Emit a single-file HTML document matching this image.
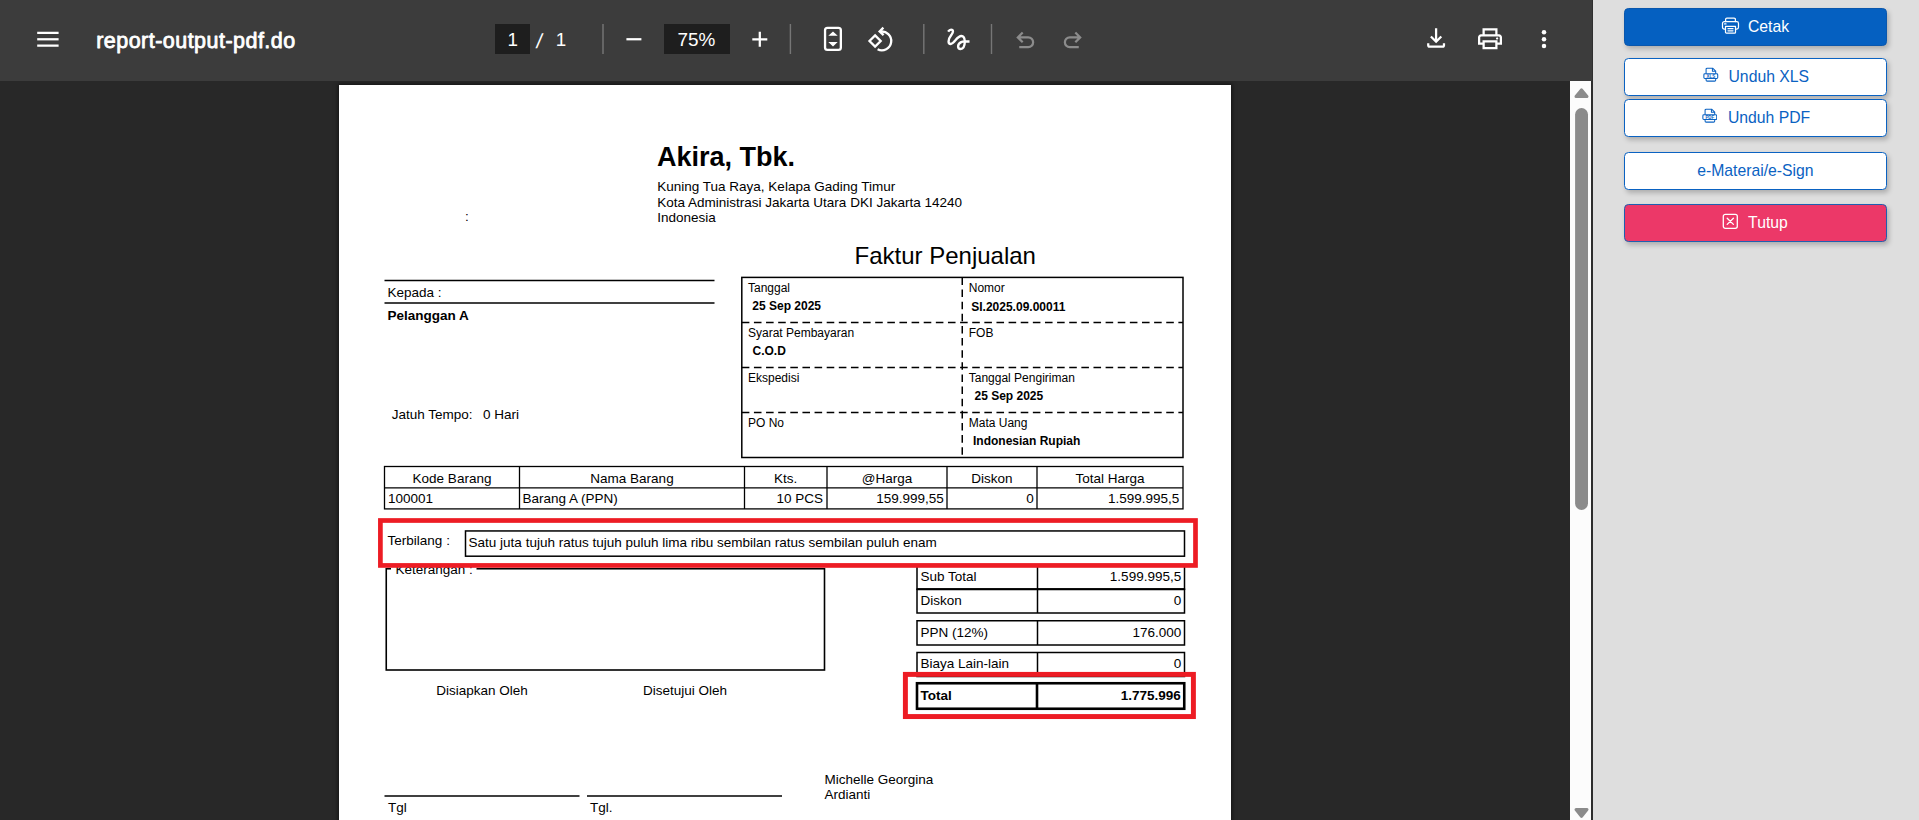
<!DOCTYPE html>
<html lang="id">
<head>
<meta charset="utf-8">
<title>report-output-pdf.do</title>
<style>
html,body{margin:0;padding:0;}
body{width:1919px;height:820px;overflow:hidden;position:relative;background:#dedede;font-family:"Liberation Sans",sans-serif;}
#viewer{position:absolute;left:0;top:0;width:1593px;height:820px;background:#282828;overflow:hidden;}
#viewer svg.pg{position:absolute;left:0;top:0;}
#tb{position:absolute;left:0;top:0;width:1592px;height:81px;background:#3c3c3c;}
#pgbg{position:absolute;left:339px;top:85px;width:892px;height:760px;background:#fff;box-shadow:0 0 4px 1px rgba(0,0,0,.55);}
#tb svg{position:absolute;left:0;top:0;}
#sb{position:absolute;left:1570px;top:81px;width:21px;height:739px;background:#fcfcfc;}
#sbline{position:absolute;left:1591px;top:81px;width:2px;height:739px;background:#2d2d2d;}
#sbline2{position:absolute;left:1592px;top:0;width:1px;height:81px;background:#2f2f2f;}
#panel{position:absolute;left:1593px;top:0;width:326px;height:820px;background:#dedede;}
.btn{position:absolute;left:31px;width:261px;height:36px;border:1px solid #0a62c2;border-radius:4.5px;background:#fff;color:#0a62c2;box-shadow:2px 3px 5px rgba(0,0,0,.22);font-size:15.75px;}
.btn span{position:absolute;top:0;line-height:36px;white-space:nowrap;}
.btn svg{position:absolute;}
.b1{top:8px;background:#0560c1;border-color:#0a57ad;color:#fff;}
.b2{top:58px;}
.b3{top:99px;}
.b4{top:152px;}
.b5{top:204px;background:#ec3868;border-color:#1f5fb0;color:#fff;}
</style>
</head>
<body>
<div id="viewer">
<div id="pgbg"></div>
<svg class="pg" width="1593" height="820" viewBox="0 0 1593 820" font-family="'Liberation Sans', sans-serif">
<line x1="384.5" y1="280.5" x2="714.5" y2="280.5" stroke="#000" stroke-width="1.4"/>
<line x1="384.5" y1="303" x2="714.5" y2="303" stroke="#000" stroke-width="1.4"/>
<rect x="741.8" y="277.4" width="441.2" height="180.1" fill="none" stroke="#000" stroke-width="1.5"/>
<line x1="741.8" y1="322.4" x2="1183" y2="322.4" stroke="#000" stroke-width="1.5" stroke-dasharray="7.58 4.547"/>
<line x1="741.8" y1="367.4" x2="1183" y2="367.4" stroke="#000" stroke-width="1.5" stroke-dasharray="7.58 4.547"/>
<line x1="741.8" y1="412.4" x2="1183" y2="412.4" stroke="#000" stroke-width="1.5" stroke-dasharray="7.58 4.547"/>
<line x1="962.25" y1="277.4" x2="962.25" y2="457.5" stroke="#000" stroke-width="1.5" stroke-dasharray="7.58 4.547"/>
<rect x="384.5" y="466.5" width="798.5" height="42.4" fill="none" stroke="#000" stroke-width="1.3"/>
<line x1="384.5" y1="487.8" x2="1183" y2="487.8" stroke="#000" stroke-width="1.3"/>
<line x1="519.5" y1="466.5" x2="519.5" y2="508.9" stroke="#000" stroke-width="1.3"/>
<line x1="744.5" y1="466.5" x2="744.5" y2="508.9" stroke="#000" stroke-width="1.3"/>
<line x1="827" y1="466.5" x2="827" y2="508.9" stroke="#000" stroke-width="1.3"/>
<line x1="947" y1="466.5" x2="947" y2="508.9" stroke="#000" stroke-width="1.3"/>
<line x1="1037" y1="466.5" x2="1037" y2="508.9" stroke="#000" stroke-width="1.3"/>
<rect x="465.5" y="530.95" width="719.0" height="25.25" fill="none" stroke="#000" stroke-width="1.5"/>
<rect x="386.25" y="568.75" width="438.25" height="101.25" fill="none" stroke="#000" stroke-width="1.6"/>
<rect x="391" y="562" width="85.5" height="14" fill="#fff"/>
<rect x="917" y="566" width="267.5" height="23.25" fill="none" stroke="#000" stroke-width="1.5"/>
<rect x="917" y="589.25" width="267.5" height="23.75" fill="none" stroke="#000" stroke-width="1.5"/>
<rect x="917" y="620.75" width="267.5" height="24.25" fill="none" stroke="#000" stroke-width="1.5"/>
<rect x="917" y="652.5" width="267.5" height="24.0" fill="none" stroke="#000" stroke-width="1.5"/>
<line x1="1037.5" y1="566" x2="1037.5" y2="613" stroke="#000" stroke-width="1.5"/>
<line x1="1037.5" y1="620.75" x2="1037.5" y2="645" stroke="#000" stroke-width="1.5"/>
<line x1="1037.5" y1="652.5" x2="1037.5" y2="676" stroke="#000" stroke-width="1.5"/>
<line x1="917" y1="589.25" x2="1184.5" y2="589.25" stroke="#000" stroke-width="1.8"/>
<rect x="917" y="683.25" width="267.25" height="25.5" fill="none" stroke="#000" stroke-width="2.6"/>
<line x1="1037" y1="683.25" x2="1037" y2="708.75" stroke="#000" stroke-width="2.6"/>
<line x1="384.5" y1="796" x2="579.5" y2="796" stroke="#000" stroke-width="1.4"/>
<line x1="587" y1="796" x2="782" y2="796" stroke="#000" stroke-width="1.4"/>
<text x="657" y="165.5" font-size="27" font-weight="700">Akira, Tbk.</text>
<text x="657.3" y="190.75" font-size="13.5">Kuning Tua Raya, Kelapa Gading Timur</text>
<text x="657.3" y="206.75" font-size="13.5">Kota Administrasi Jakarta Utara DKI Jakarta 14240</text>
<text x="657.3" y="222" font-size="13.5">Indonesia</text>
<text x="465" y="221" font-size="13.5">:</text>
<text x="854.5" y="263.75" font-size="24">Faktur Penjualan</text>
<text x="387.5" y="297" font-size="13.5">Kepada :</text>
<text x="387.5" y="320" font-size="13.5" font-weight="700">Pelanggan A</text>
<text x="391.8" y="418.75" font-size="13.5">Jatuh Tempo:</text>
<text x="483.1" y="418.75" font-size="13.5">0 Hari</text>
<text x="748" y="292" font-size="12">Tanggal</text>
<text x="968.75" y="292" font-size="12">Nomor</text>
<text x="748" y="337" font-size="12">Syarat Pembayaran</text>
<text x="968.75" y="337" font-size="12">FOB</text>
<text x="748" y="382" font-size="12">Ekspedisi</text>
<text x="968.75" y="382" font-size="12">Tanggal Pengiriman</text>
<text x="748" y="427" font-size="12">PO No</text>
<text x="968.75" y="427" font-size="12">Mata Uang</text>
<text x="752.3" y="310.2" font-size="12" font-weight="700">25 Sep 2025</text>
<text x="971.25" y="311.25" font-size="12" font-weight="700">SI.2025.09.00011</text>
<text x="752.5" y="355" font-size="12" font-weight="700">C.O.D</text>
<text x="974.5" y="400" font-size="12" font-weight="700">25 Sep 2025</text>
<text x="973" y="445" font-size="12" font-weight="700">Indonesian Rupiah</text>
<text x="452" y="483" font-size="13.5" text-anchor="middle">Kode Barang</text>
<text x="632" y="483" font-size="13.5" text-anchor="middle">Nama Barang</text>
<text x="785.75" y="483" font-size="13.5" text-anchor="middle">Kts.</text>
<text x="887" y="483" font-size="13.5" text-anchor="middle">@Harga</text>
<text x="992" y="483" font-size="13.5" text-anchor="middle">Diskon</text>
<text x="1110" y="483" font-size="13.5" text-anchor="middle">Total Harga</text>
<text x="388" y="503" font-size="13.5">100001</text>
<text x="522.5" y="503" font-size="13.5">Barang A (PPN)</text>
<text x="823" y="503" font-size="13.5" text-anchor="end">10 PCS</text>
<text x="943.75" y="503" font-size="13.5" text-anchor="end">159.999,55</text>
<text x="1033.75" y="503" font-size="13.5" text-anchor="end">0</text>
<text x="1179.25" y="503" font-size="13.5" text-anchor="end">1.599.995,5</text>
<text x="387.6" y="544.8" font-size="13.5">Terbilang :</text>
<text x="468.6" y="546.7" font-size="13.5">Satu juta tujuh ratus tujuh puluh lima ribu sembilan ratus sembilan puluh enam</text>
<text x="395.4" y="574" font-size="13.5">Keterangan :</text>
<text x="920.5" y="580.75" font-size="13.5">Sub Total</text>
<text x="1181.2" y="580.75" font-size="13.5" text-anchor="end">1.599.995,5</text>
<text x="920.5" y="605" font-size="13.5">Diskon</text>
<text x="1181.2" y="605" font-size="13.5" text-anchor="end">0</text>
<text x="920.5" y="636.75" font-size="13.5">PPN (12%)</text>
<text x="1181.2" y="636.75" font-size="13.5" text-anchor="end">176.000</text>
<text x="920.5" y="668" font-size="13.5">Biaya Lain-lain</text>
<text x="1181.2" y="668" font-size="13.5" text-anchor="end">0</text>
<text x="920.5" y="700" font-size="13.5" font-weight="700">Total</text>
<text x="1180.75" y="700" font-size="13.5" font-weight="700" text-anchor="end">1.775.996</text>
<text x="436.25" y="695" font-size="13.5">Disiapkan Oleh</text>
<text x="643" y="695" font-size="13.5">Disetujui Oleh</text>
<text x="388" y="812.3" font-size="13.5">Tgl</text>
<text x="590" y="812.3" font-size="13.5">Tgl.</text>
<text x="824.5" y="784.25" font-size="13.5">Michelle Georgina</text>
<text x="824.5" y="799.25" font-size="13.5">Ardianti</text>
<rect x="380.4" y="520.5" width="815.1" height="44.950000000000045" fill="none" stroke="#ed1c24" stroke-width="4.7"/>
<rect x="905.4" y="674.4" width="288.0000000000001" height="42.14999999999998" fill="none" stroke="#ed1c24" stroke-width="4.95"/>
</svg>
<div id="tb">
<svg width="1593" height="81" viewBox="0 0 1593 81" font-family="'Liberation Sans', sans-serif" fill="#fff">
<rect x="37.2" y="31.75" width="21.4" height="2.25" fill="#fff"/>
<rect x="37.2" y="38.15" width="21.4" height="2.25" fill="#fff"/>
<rect x="37.2" y="44.5" width="21.4" height="2.25" fill="#fff"/>
<text x="96.2" y="47.8" font-size="21.5" letter-spacing="0.47" stroke="#fff" stroke-width="0.8" stroke-linejoin="round">report-output-pdf.do</text>
<rect x="495" y="24" width="35" height="30" fill="#1e1e1e"/>
<text x="512.7" y="46.4" font-size="18.8" text-anchor="middle">1</text>
<text x="0" y="0" font-size="20.5" text-anchor="middle" transform="translate(538.3,48.2) skewX(-9)">/</text>
<text x="560.9" y="46.4" font-size="18.8" text-anchor="middle">1</text>
<rect x="602.3" y="24" width="1.4" height="30" fill="#fff" fill-opacity="0.3"/>
<rect x="789.6999999999999" y="24" width="1.4" height="30" fill="#fff" fill-opacity="0.3"/>
<rect x="923.0999999999999" y="24" width="1.4" height="30" fill="#fff" fill-opacity="0.3"/>
<rect x="990.8" y="24" width="1.4" height="30" fill="#fff" fill-opacity="0.3"/>
<g transform="translate(618.9,54.25) scale(0.03125)"><path d="M240-444v-72h480v72H240Z" fill="#fff"/></g>
<rect x="664" y="24" width="66" height="30" fill="#1e1e1e"/>
<text x="696.5" y="46.4" font-size="18.9" text-anchor="middle">75%</text>
<g transform="translate(744.8,54.25) scale(0.03125)"><path d="M444-444H240v-72h204v-204h72v204h204v72H516v204h-72v-204Z" fill="#fff"/></g>
<rect x="825.05" y="27.95" width="15.8" height="22" rx="2.4" fill="none" stroke="#fff" stroke-width="2.3"/>
<path d="M833 31.6 L837.7 35.8 H828.3 Z M833 46.4 L837.7 42.1 H828.3 Z" fill="#fff"/>
<path d="M875.1 35.4 L880.7 41 L875.1 46.6 L869.5 41 Z" fill="none" stroke="#fff" stroke-width="2.3" stroke-linejoin="miter"/>
<path d="M880 31.7 A9.4 9.4 0 1 1 877.6 49.3" fill="none" stroke="#fff" stroke-width="2.3"/>
<path d="M883.4 27.6 L879.6 31.5 L883.6 35.2" fill="none" stroke="#fff" stroke-width="2.3"/>
<g transform="translate(943.25,54.25) scale(0.03125)"><path d="M155 -724 Q200 -790 250 -790 Q310 -790 310 -728 Q310 -690 262 -622 Q170 -500 170 -410 Q170 -327 241 -327 Q290 -327 396 -453 Q500 -583 582 -583 Q680 -583 691 -410 Q683 -170 555 -170 Q476 -170 476 -250 Q476 -330 560 -380 Q610 -408 691 -410 L840 -410" fill="none" stroke="#fff" stroke-width="76" stroke-linecap="butt" stroke-linejoin="round"/></g>
<g transform="translate(1010.25,54.25) scale(0.03125)"><path d="M288-192v-72h288q50 0 85-35t35-85q0-50-35-85t-85-35H330l93 93-51 51-180-180 180-180 51 51-93 93h246q80 0 136 56t56 136q0 80-56 136t-136 56H288Z" fill="#8c8c8c"/></g>
<g transform="translate(1057.75,54.25) scale(0.03125)"><path d="M672-192H384q-80 0-136-56t-56-136q0-80 56-136t136-56h246l-93-93 51-51 180 180-180 180-51-51 93-93H384q-50 0-85 35t-35 85q0 50 35 85t85 35h288v72Z" fill="#8c8c8c"/></g>
<g transform="translate(1421.1,53.85) scale(0.03125)"><path d="M480-336 288-528l51-51 105 105v-342h72v342l105-105 51 51-192 192ZM263.720-192Q234-192 213-213.150T192-264v-72h72v72h432v-72h72v72q0 29.700-21.160 50.850Q725.680-192 695.960-192H263.720Z" fill="#fff"/></g>
<g transform="translate(1475,53.85) scale(0.03125)"><path d="M648-624v-120H312v120h-72v-192h480v192h-72Zm-480 72h624-624Zm539.790 96q15.210 0 25.710-10.290t10.500-25.500q0-15.210-10.290-25.710t-25.500-10.500q-15.210 0-25.710 10.290t-10.500 25.500q0 15.210 10.290 25.710t25.500 10.500ZM648-216v-144H312v144h336Zm72 72H240v-144H96v-240q0-40 28-68t68-28h576q40 0 68 28t28 68v240H720v144Zm72-216v-168.210Q792-538 781.650-548.500 771.300-559 756-559H204q-15.300 0-25.650 10.350Q168-538.300 168-523v163h72v-72h480v72h72Z" fill="#fff"/></g>
<circle cx="1544" cy="32.3" r="2.25" fill="#fff"/>
<circle cx="1544" cy="39.15" r="2.25" fill="#fff"/>
<circle cx="1544" cy="46" r="2.25" fill="#fff"/>
</svg>
</div>
<div id="sb">
<svg width="21" height="739" viewBox="0 0 21 739">
<path d="M11.5 8.9 L16.9 15.5 H6.1 Z" fill="#8b8b8b" stroke="#8b8b8b" stroke-width="3.2" stroke-linejoin="round"/>
<rect x="5.1" y="27" width="12.9" height="402" rx="6.45" fill="#8b8b8b"/>
<path d="M11.5 735.3 L16.9 728.5 H6.1 Z" fill="#8b8b8b" stroke="#8b8b8b" stroke-width="3.2" stroke-linejoin="round"/>
</svg>
</div>
<div id="sbline"></div><div id="sbline2"></div>
</div>
<div id="panel">
<div class="btn b1"><svg style="left:96px;top:7px" width="19" height="19" viewBox="0 0 19 19" fill="none" stroke="#fff" stroke-width="1.25" stroke-linejoin="round" stroke-linecap="round"><path d="M4.6 5.6 V3.4 A1.3 1.3 0 0 1 5.9 2.1 H13.1 A1.3 1.3 0 0 1 14.4 3.4 V5.6"/><path d="M4.4 13 H3.2 A1.7 1.7 0 0 1 1.5 11.3 V7.4 A1.8 1.8 0 0 1 3.3 5.6 H15.7 A1.8 1.8 0 0 1 17.5 7.4 V11.3 A1.7 1.7 0 0 1 15.8 13 H14.6"/><path d="M4.5 10.4 H14.5 V16.2 A0.9 0.9 0 0 1 13.6 17.1 H5.4 A0.9 0.9 0 0 1 4.5 16.2 Z"/><path d="M7 12.7 H12 M7 14.8 H12 M3.6 7.9 H5"/></svg><span style="left:122.9px">Cetak</span></div>
<div class="btn b2"><svg style="left:78.0px;top:7.9px" width="15.6" height="15.4" viewBox="0 0 16.2 16" fill="none" stroke="#0a62c2" stroke-width="1.1" stroke-linejoin="round"><path d="M3.2 7 V2.3 A1.1 1.1 0 0 1 4.3 1.2 H10 L13.2 4.4 V7 M9.8 1.4 V4.5 H13"/><rect x="0.9" y="7" width="14.4" height="5" rx="1"/><path d="M3.2 12 V13.6 A1.1 1.1 0 0 0 4.3 14.7 H12.1 A1.1 1.1 0 0 0 13.2 13.6 V12"/><text x="8.1" y="11.2" font-size="4.6" font-weight="700" text-anchor="middle" stroke="none" fill="#0a62c2" font-family="'Liberation Sans',sans-serif">XLS</text></svg><span style="left:103.5px">Unduh XLS</span></div>
<div class="btn b3"><svg style="left:76.9px;top:7.9px" width="15.6" height="15.4" viewBox="0 0 16.2 16" fill="none" stroke="#0a62c2" stroke-width="1.1" stroke-linejoin="round"><path d="M3.2 7 V2.3 A1.1 1.1 0 0 1 4.3 1.2 H10 L13.2 4.4 V7 M9.8 1.4 V4.5 H13"/><rect x="0.9" y="7" width="14.4" height="5" rx="1"/><path d="M3.2 12 V13.6 A1.1 1.1 0 0 0 4.3 14.7 H12.1 A1.1 1.1 0 0 0 13.2 13.6 V12"/><text x="8.1" y="11.2" font-size="4.6" font-weight="700" text-anchor="middle" stroke="none" fill="#0a62c2" font-family="'Liberation Sans',sans-serif">PDF</text></svg><span style="left:102.9px">Unduh PDF</span></div>
<div class="btn b4"><span style="left:72.2px">e-Materai/e-Sign</span></div>
<div class="btn b5"><svg style="left:97.4px;top:8px" width="17" height="17" viewBox="0 0 17 17" fill="none" stroke="#fff" stroke-width="1.3" stroke-linecap="round"><rect x="1.3" y="1.3" width="14" height="14" rx="2"/><path d="M5.2 5.2 L11.4 11.4 M11.4 5.2 L5.2 11.4"/></svg><span style="left:123.1px">Tutup</span></div>
</div>
</body>
</html>
